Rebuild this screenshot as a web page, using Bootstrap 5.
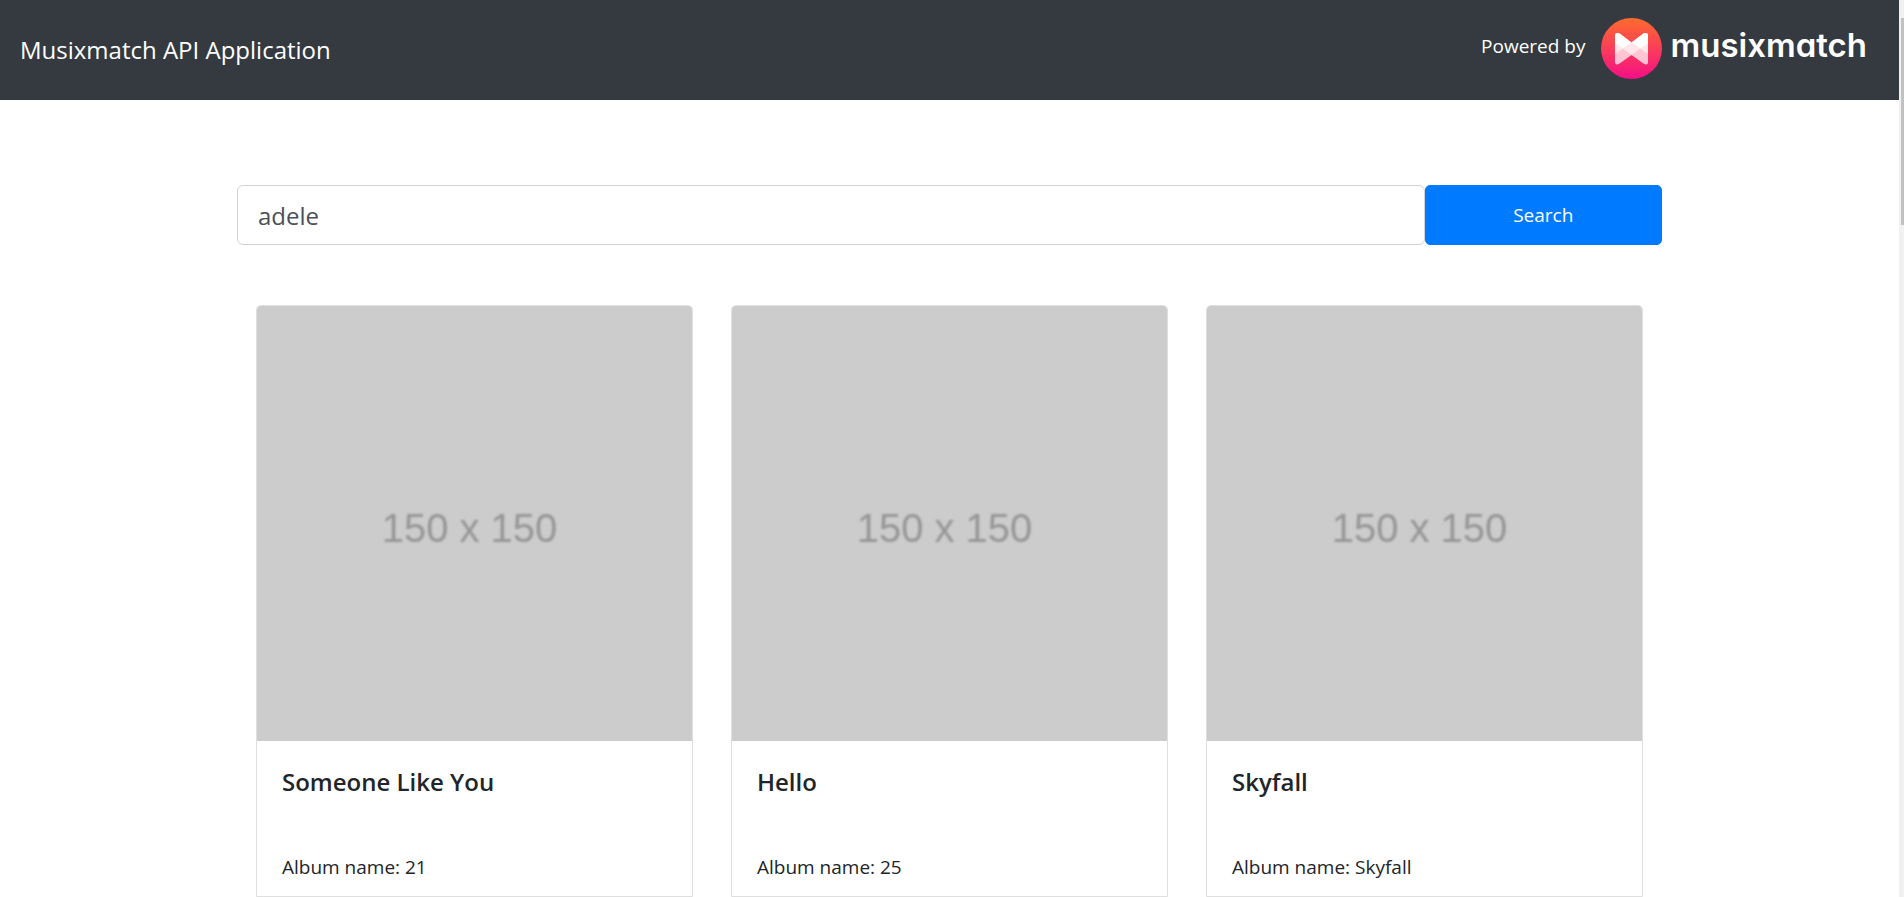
<!DOCTYPE html>
<html lang="en">
<head>
<meta charset="utf-8">
<meta name="viewport" content="width=device-width, initial-scale=1">
<title>Musixmatch API Application</title>
<link href="https://cdn.jsdelivr.net/npm/bootstrap@5.3.0/dist/css/bootstrap.min.css" rel="stylesheet">
<style>
  html { font-size: 20px; }
  body { font-family: "Open Sans", "Noto Sans", sans-serif; font-size: 19px; line-height: 30px; color: #212529; background: #fff; }
  .page { height: 100vh; overflow: hidden; }
  .topbar { background: #343a40; height: 100px; padding: 0 32px 0 20px; }
  .brand-link { font-size: 24px; color: #fff; text-decoration: none; }
  .credit { gap: 16px; padding-bottom: 3px; }
  .powered { color: #fff; }
  .logo { gap: 8px; color: #fff; text-decoration: none; }
  .wordmark { font-family: Inter, sans-serif; font-weight: 600; font-size: 33px; line-height: 44px; font-feature-settings: "cv11"; padding-bottom: 8px; }
  .wrap { max-width: 1425px; }
  .search-row { padding-top: 85px; padding-bottom: 60px; }
  .search-box { height: 60px; padding: 8px 20px; font-size: 24px; color: #495057; border: 1px solid #ced4da; border-radius: 6px; }
  .btn-search { height: 60px; font-size: 19px; border-radius: 5px; --bs-btn-bg: #007bff; --bs-btn-border-color: #007bff; --bs-btn-color: #fff; }
  .track-col { padding: 0 19px; }
  .track { border: 1px solid #dfdfdf; border-radius: 5px 5px 0 0; overflow: hidden; }
  .cover { background: #ccc; color: #969696; font-family: "Liberation Sans", sans-serif; font-size: 40px; }
  .cover span { padding-top: 8px; padding-right: 10px; filter: blur(1px); }
  .track-body { padding: 26px 25px 14px; }
  .track-title { font-size: 24px; line-height: 30px; font-weight: 600; margin-bottom: 55px; }
  .scroll-track { width: 5px; background: #f1f1f1; padding: 18px 0 0 2px; }
  .scroll-thumb { height: 207px; background: #c1c1c1; }
</style>
</head>
<body>
<div class="page d-flex">
  <div class="flex-grow-1">
    <nav class="topbar d-flex align-items-center justify-content-between">
      <a class="brand-link" href="#">Musixmatch API Application</a>
      <div class="credit d-flex align-items-center">
        <span class="powered pb-1">Powered by</span>
        <a class="logo d-flex align-items-center" href="#">
          <svg width="61" height="61" viewBox="0 0 61 61" aria-hidden="true">
            <defs>
              <linearGradient id="disc" x1="0" y1="0" x2="0" y2="1"><stop offset="0" stop-color="#ff6b2c"/><stop offset="1" stop-color="#f50f87"/></linearGradient>
              <clipPath id="bow"><path d="M14 18Q14 13.500 18.500 15.500L30.500 24.500 42.500 15.500Q47 13.500 47 18V43.500Q47 48 42.500 45.500L30.500 37 18.500 45.500Q14 48 14 43.500Z"/></clipPath>
            </defs>
            <circle cx="30.500" cy="30.500" r="30.500" fill="url(#disc)"/>
            <g clip-path="url(#bow)">
              <path d="M14 12H47V49H14Z" fill="#fff" fill-opacity=".72"/>
              <path d="M14 12V36L22 30.500 30.500 37 39 30.500 47 36V12Z" fill="#fff" fill-opacity=".55"/>
              <path d="M14 12V25L22 30.500 30.500 24 39 30.500 47 25V12Z" fill="#fff"/>
            </g>
          </svg>
          <span class="wordmark">musixmatch</span>
        </a>
      </div>
    </nav>
    <main class="container-fluid wrap p-0">
      <form class="search-row row g-0" onsubmit="return false">
        <div class="col-10"><input class="search-box form-control" type="text" value="adele" aria-label="Search tracks"></div>
        <div class="col-2"><button class="btn btn-primary btn-search w-100" type="submit">Search</button></div>
      </form>
      <div class="row g-0">
        <div class="col-4 track-col"><article class="card track">
          <div class="cover ratio ratio-1x1"><span class="d-flex align-items-center justify-content-center">150 x 150</span></div>
          <div class="track-body"><h5 class="track-title">Someone Like You</h5><p class="mb-0">Album name: 21</p></div>
        </article></div>
        <div class="col-4 track-col"><article class="card track">
          <div class="cover ratio ratio-1x1"><span class="d-flex align-items-center justify-content-center">150 x 150</span></div>
          <div class="track-body"><h5 class="track-title">Hello</h5><p class="mb-0">Album name: 25</p></div>
        </article></div>
        <div class="col-4 track-col"><article class="card track">
          <div class="cover ratio ratio-1x1"><span class="d-flex align-items-center justify-content-center">150 x 150</span></div>
          <div class="track-body"><h5 class="track-title">Skyfall</h5><p class="mb-0">Album name: Skyfall</p></div>
        </article></div>
      </div>
    </main>
  </div>
  <div class="scroll-track flex-shrink-0" aria-hidden="true"><div class="scroll-thumb"></div></div>
</div>
<script src="https://cdn.jsdelivr.net/npm/bootstrap@5.3.0/dist/js/bootstrap.bundle.min.js"></script>
</body>
</html>
